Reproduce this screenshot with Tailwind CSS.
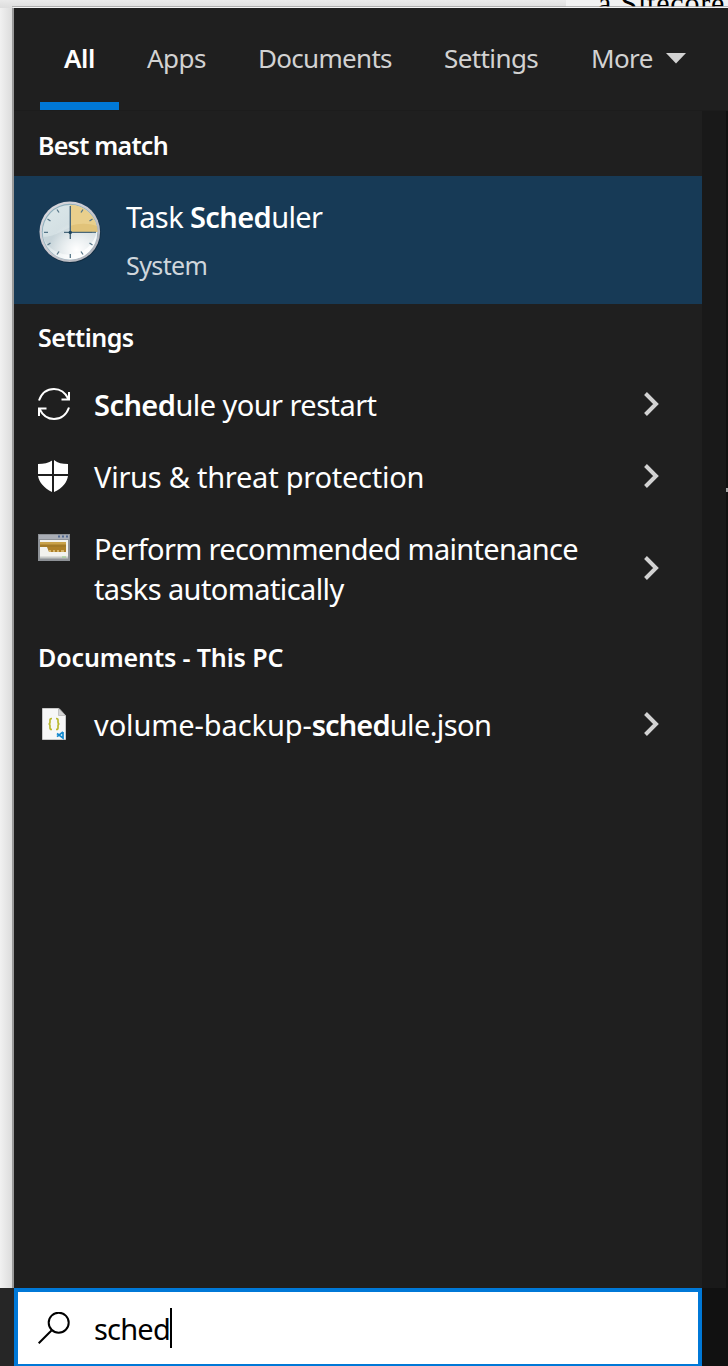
<!DOCTYPE html>
<html lang="en">
<head>
<meta charset="utf-8">
<title>Search</title>
<script src="https://cdn.jsdelivr.net/npm/@tailwindcss/browser@4"></script>
</head>
<body class="relative w-[728px] h-[1366px] overflow-hidden bg-[#1f1f1f] font-['Noto_Sans','Open_Sans',sans-serif] text-white flex flex-col">
  <div class="h-2 shrink-0 bg-linear-to-b from-[#eaeaea] to-[#dddddd] flex overflow-hidden">
    <div class="w-[566px] shrink-0"></div>
    <div class="grow bg-[#f2f2f2] text-black font-['Liberation_Serif',serif] text-[30px] leading-[30px] pl-[32px] whitespace-nowrap overflow-hidden"><span class="block -mt-[12px] tracking-[0.8px]">a Sitecore</span></div>
  </div>
  <div class="absolute left-[12px] top-[6px] w-[716px] h-px bg-[#9b9b9b]/70"></div>
  <div class="absolute left-[13px] top-[7px] w-[715px] h-px bg-[#f4f4f4]"></div>

  <div class="flex h-[1280px] shrink-0">
    <div class="w-[14px] shrink-0 bg-linear-to-r from-[#f1f1f1] to-[#dcdcdc] border-r-2 border-[#9a9a9a]"></div>
    <main class="grow flex flex-col">
      <nav class="h-[102px] shrink-0 flex text-[26px] leading-[36px] text-[#d2d2d2] pt-[32px] pl-[26px] whitespace-nowrap">
        <div class="w-[79px] h-[70px] pl-[24px] border-b-8 border-[#0078d7] font-semibold text-white"><span class="tracking-[-0.4px]">All</span></div>
        <div class="w-[112px] pl-[28px]"><span class="tracking-[-0.5px]">Apps</span></div>
        <div class="w-[185px] pl-[27px]"><span class="tracking-[-0.7px]">Documents</span></div>
        <div class="w-[147px] pl-[28px]"><span class="tracking-[-0.6px]">Settings</span></div>
        <div class="pl-[28px] flex"><span class="w-[75px] tracking-[-0.6px]">More</span><svg class="mt-[13px] w-5 h-[11px]" viewBox="0 0 20 11"><path d="M0 0h20L10 10.500z" fill="#d2d2d2"/></svg></div>
      </nav>
      <div class="flex grow border-t border-[#1c1c1c]">
        <section class="w-[688px] shrink-0">
          <h2 class="h-[65px] pl-[24px] pt-[16px] text-[25px] leading-[36px] font-semibold"><span class="tracking-[-0.75px]">Best match</span></h2>
          <div class="h-[128px] bg-[#173a56] flex">
            <svg class="w-16 h-16 ml-6 mt-6 shrink-0" viewBox="0 0 64 64">
              <defs>
                <linearGradient id="face" x1="0" y1="0" x2=".7" y2="1"><stop offset="0" stop-color="#dce8ea"/><stop offset=".5" stop-color="#d3dfe3"/><stop offset="1" stop-color="#ffffff"/></linearGradient>
                <linearGradient id="rim" x1="0" y1="0" x2="1" y2="1"><stop offset="0" stop-color="#dddde2"/><stop offset=".5" stop-color="#c9c8cf"/><stop offset="1" stop-color="#a9adb5"/></linearGradient>
                <radialGradient id="glow" cx=".62" cy=".82" r=".5"><stop offset="0" stop-color="#fff"/><stop offset="1" stop-color="#fff" stop-opacity="0"/></radialGradient>
              </defs>
              <circle cx="32.300" cy="32.500" r="30.500" fill="#102c42"/>
              <circle cx="31.800" cy="31.800" r="30.300" fill="url(#rim)"/>
              <circle cx="31.800" cy="31.800" r="28" fill="#8fb0bd"/>
              <circle cx="32" cy="32.300" r="27.300" fill="url(#face)"/>
              <path d="M5 37c14 0 21-9 32-11 9-2 16-1 22 0a28 28 0 0 1-54 11z" fill="#b6c5cc" opacity=".45"/>
              <circle cx="32" cy="32.300" r="27.300" fill="url(#glow)"/>
              <path d="M32 32V4.800A27.500 27.500 0 0 1 59.500 32z" fill="#e9cf8c"/>
              <path d="M32 26c9-3 18-3 27 0l.5 6H32z" fill="#dcba6d" opacity=".6"/>
              <g stroke="#567688" stroke-width="1.300">
                <path d="M32.300 54v4M6 32.300h4M54 32.300h4M19 9.500l2 3M9.500 19l3 2M9.500 45l3-2M19 54.500l2-3M45 54.500l-2-3M54.500 45l-3-2M45 9.500l-2 3M54.500 19l-3 2"/>
                <path d="M32.300 6v33M26 32.400h28" stroke="#48677a" stroke-width="1.400"/>
              </g>
              <circle cx="32.300" cy="32.400" r="1.700" fill="#1c425b"/>
            </svg>
            <div class="ml-6 pt-[21px] whitespace-nowrap">
              <div class="text-[29px] leading-[40px]"><span class="tracking-[-0.6px]">Task <b class="font-semibold">Sched</b>uler</span></div>
              <div class="text-[25px] leading-[36px] mt-[10px] text-[#cfd6dc]"><span class="tracking-[-0.6px]">System</span></div>
            </div>
          </div>
          <h2 class="h-[64px] pl-[24px] pt-[15px] text-[25px] leading-[36px] font-semibold"><span class="tracking-[-0.5px]">Settings</span></h2>
          <div class="h-[72px] pl-6 pr-[42px] flex text-[29px] leading-[40px]">
            <svg class="w-8 h-8 mt-5 mr-6 shrink-0" viewBox="0 0 32 32" fill="none" stroke="#fff" stroke-width="2"><path d="M1 12.500C3.500 5.500 9 1 16 1c6 0 11.500 4 14.500 10M31 4v7.500h-7.500M31 19.500C28.500 26.500 23 31 16 31 10 31 4.500 27 1.500 21M1 28v-7.500h7.500"/></svg>
            <span class="grow mt-[17px]"><span class="tracking-[-0.55px]"><b class="font-semibold">Sched</b>ule your restart</span></span>
            <svg class="w-4 h-6 mt-6 shrink-0" viewBox="0 0 16 24" fill="none" stroke="#d2d2d2" stroke-width="4"><path d="M1.500 1.500L12 12 1.500 22.500"/></svg>
          </div>
          <div class="h-[72px] pl-6 pr-[42px] flex text-[29px] leading-[40px]">
            <svg class="w-8 h-8 mt-5 mr-6 shrink-0" viewBox="0 0 32 32"><path d="M15 0v14H0V4c6 0 10-1 15-4zM0 16h14v16C6 28 1 22 0 16zM16 0c4 3 8 4 14 4v10H16zM16 16h14c-1 6-5 12-14 16z" fill="#fff"/><path d="M15 0v32M0 15h30" stroke="#1f1f1f" stroke-width="2"/></svg>
            <span class="grow mt-[17px]"><span class="tracking-[-0.25px]">Virus &amp; threat protection</span></span>
            <svg class="w-4 h-6 mt-6 shrink-0" viewBox="0 0 16 24" fill="none" stroke="#d2d2d2" stroke-width="4"><path d="M1.500 1.500L12 12 1.500 22.500"/></svg>
          </div>
          <div class="h-[112px] pl-6 pr-[42px] flex text-[29px] leading-[40px]">
            <svg class="w-8 h-8 mt-5 mr-6 shrink-0" viewBox="0 0 32 32"><path d="M0 2h32v27H0z" fill="#8d9196"/><path d="M1 3h30v4H1z" fill="#a9adb5"/><path d="M20 3.500h2v2h-2zM24 3.500h2v2h-2zM28 3.500h2v2h-2z" fill="#536a91"/><path d="M2 8h28v17H2z" fill="#f2f2ee"/><path d="M2 10h26v3H2z" fill="#c9a24a"/><path d="M2 12.500h26V15H2z" fill="#a27a28"/><path d="M9 15h19v5H11z" fill="#ad8029"/><path d="M11 18h2v2h-2zM15 18h2v2h-2zM19 18h2v2h-2zM23 18h3v2h-3z" fill="#d6b468"/><path d="M2 24.500h28v2H2z" fill="#c6c9c7"/><path d="M24 24.500h4v1h-4z" fill="#92cf80"/></svg>
            <span class="grow mt-[17px] whitespace-nowrap"><span class="tracking-[-0.69px]">Perform recommended maintenance</span><br><span class="tracking-[-0.6px]">tasks automatically</span></span>
            <svg class="w-4 h-6 mt-11 shrink-0" viewBox="0 0 16 24" fill="none" stroke="#d2d2d2" stroke-width="4"><path d="M1.500 1.500L12 12 1.500 22.500"/></svg>
          </div>
          <h2 class="h-[64px] pl-[24px] pt-[15px] text-[25px] leading-[36px] font-semibold"><span class="tracking-[-0.13px]">Documents - This PC</span></h2>
          <div class="h-[72px] pl-6 pr-[42px] flex text-[29px] leading-[40px]">
            <svg class="w-8 h-8 mt-5 mr-6 shrink-0" viewBox="0 0 32 32"><path d="M4.500.5H21l6.500 7v24h-23z" fill="#f7f7f7" stroke="#c8c8c8"/><path d="M20.500.5v7h7z" fill="#d5d5d5" stroke="#aaa" stroke-width=".6"/><path d="M14 10.500c-2.500 0-2 1.500-2 3.500 0 1.300-.5 2-1.500 2 1 0 1.500.7 1.500 2 0 2-.5 3.500 2 3.500M18 10.500c2.500 0 2 1.500 2 3.500 0 1.300.5 2 1.500 2-1 0-1.500.7-1.500 2 0 2 .5 3.500-2 3.500" fill="none" stroke="#b9b830" stroke-width="1.700"/><path d="M25 24v6l-6-4.500M25 24l-6 4.700" fill="none" stroke="#1489cf" stroke-width="1.700"/></svg>
            <span class="grow mt-[17px]"><span class="tracking-[-0.1px]">volume-backup-<b class="font-semibold tracking-[-0.9px]">sched</b><span class="tracking-[-0.6px]">ule.json</span></span></span>
            <svg class="w-4 h-6 mt-6 shrink-0" viewBox="0 0 16 24" fill="none" stroke="#d2d2d2" stroke-width="4"><path d="M1.500 1.500L12 12 1.500 22.500"/></svg>
          </div>
        </section>
        <aside class="grow bg-[#191919] border-r-2 border-[#101010]"></aside>
      </div>
    </main>
  </div>

  <footer class="h-[78px] shrink-0 flex bg-[#111111]">
    <div class="w-[14px] shrink-0 bg-[#262626]"></div>
    <div class="w-[688px] h-[78px] bg-white border-4 border-b-2 border-[#0078d7] flex text-black text-[29px] leading-[40px] pl-5">
      <svg class="w-8 h-8 mt-5 mr-6 shrink-0" viewBox="0 0 32 32" fill="none" stroke="#000" stroke-width="2"><circle cx="20.700" cy="10.700" r="10"/><path d="M13.500 18.500L.7 31.300"/></svg>
      <span class="mt-[17px]"><span class="tracking-[-0.8px]">sched</span></span>
      <span class="w-[2px] h-10 mt-4 bg-black"></span>
    </div>
  </footer>
  <div class="absolute left-[726px] top-[488px] w-[2px] h-1 bg-[#a5a5a5]"></div>
</body>
</html>
